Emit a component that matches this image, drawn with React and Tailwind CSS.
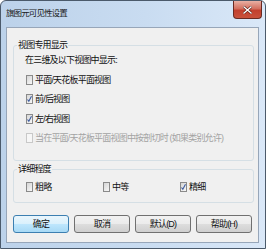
import { useState } from "react";

const font = "font-['Liberation_Sans','Noto_Sans_CJK_SC',sans-serif]";

function CheckBox({ label, checked, disabled, onChange }) {
  return (
    <label
      className={`flex items-center gap-[2px] h-[12px] ${
        disabled ? "text-[#a3a3a3]" : "text-[#111]"
      }`}
      onClick={() => !disabled && onChange && onChange(!checked)}
    >
      <span
        className={`flex items-center justify-center w-[7px] h-[10px] border ${
          disabled
            ? "border-[#c8c8c8] bg-[#f6f6f6]"
            : "border-[#8a8a8a] bg-[linear-gradient(135deg,#d6d6d6,#f7f7f7)]"
        }`}
      >
        {checked && (
          <svg width="6" height="8" viewBox="0 0 6 8">
            <path d="M0.6 4.6 L2.2 6.8 L5.4 0.8" fill="none" stroke="#3b5a9e" strokeWidth="1.3" />
          </svg>
        )}
      </span>
      <span>{label}</span>
    </label>
  );
}

function Button({ children, primary }) {
  return (
    <button
      className={`w-[56px] h-[18px] rounded-[3px] border text-[9px] leading-[12px] tracking-[-0.8px] text-[#111] ${
        primary
          ? "border-[#3c7fb1] bg-[linear-gradient(#eaf6fd,#d9f0fc_50%,#bee6fd_51%,#a7d9f5)]"
          : "border-[#707070] bg-[linear-gradient(#f2f2f2,#ebebeb_50%,#dddddd_51%,#cfcfcf)]"
      }`}
    >
      {children}
    </button>
  );
}

export default function App() {
  const [views, setViews] = useState({ plan: false, front: true, left: true });
  const [level, setLevel] = useState("fine");

  return (
    <div
      className={`w-[266px] h-[249px] flex flex-col border border-[#4b5a6b] rounded-t-[6px] bg-[linear-gradient(to_right,#bcd2ea,#c9dcf1_55%,#dae8f8)] ${font}`}
    >
      <div className="h-[26px] flex items-start">
        <div className="pl-[5px] pt-[7px] text-[8.5px] leading-[11px] tracking-[-0.9px] text-[#1b1b1b]">
          旗图元可见性设置
        </div>
        <div className="ml-auto mr-[3px] w-[29px] h-[18px] flex items-center justify-center rounded-b-[4px] border border-t-0 border-[#6a2a22] bg-[linear-gradient(#e9b0a4,#d36f5f_45%,#c2402e_55%,#c9523c)]">
          <svg width="9" height="8" viewBox="0 0 9 8">
            <path d="M1 1 L8 7 M8 1 L1 7" stroke="#5a1d15" strokeWidth="2.6" strokeLinecap="square" />
            <path d="M1 1 L8 7 M8 1 L1 7" stroke="#fff" strokeWidth="1.4" strokeLinecap="square" />
          </svg>
        </div>
      </div>

      <div className="flex-1 ml-[5px] mr-[6px] mb-[5px] border border-[#97a6b9] bg-[#f0f0f0] pl-[6px] pr-[4px] text-[9px] leading-[12px] tracking-[-0.8px]">
        <fieldset className="mt-[12px] border border-[#d5dfe5] rounded-[3px] pb-[16px]">
          <legend className="ml-[3px] px-[1px] leading-[11px] text-[#111]">视图专用显示</legend>
          <div className="flex flex-col gap-[7.5px] pt-[3px] pl-[12px]">
            <div className="-ml-[1px] text-[#111]">在三维及以下视图中显示:</div>
            <CheckBox
              label="平面/天花板平面视图"
              checked={views.plan}
              onChange={(v) => setViews({ ...views, plan: v })}
            />
            <CheckBox
              label="前/后视图"
              checked={views.front}
              onChange={(v) => setViews({ ...views, front: v })}
            />
            <CheckBox
              label="左/右视图"
              checked={views.left}
              onChange={(v) => setViews({ ...views, left: v })}
            />
            <CheckBox label="当在平面/天花板平面视图中按剖切时 (如果类别允许)" disabled />
          </div>
        </fieldset>

        <fieldset className="mt-[3px] border border-[#d5dfe5] rounded-[3px] pb-[9px]">
          <legend className="ml-[3px] px-[1px] leading-[11px] text-[#111]">详细程度</legend>
          <div className="flex pt-[6px] pl-[12px]">
            <div className="w-[77px]">
              <CheckBox label="粗略" checked={level === "coarse"} onChange={() => setLevel("coarse")} />
            </div>
            <div className="w-[77px]">
              <CheckBox label="中等" checked={level === "medium"} onChange={() => setLevel("medium")} />
            </div>
            <div>
              <CheckBox label="精细" checked={level === "fine"} onChange={() => setLevel("fine")} />
            </div>
          </div>
        </fieldset>

        <div className="flex gap-[5px] mt-[12px]">
          <Button primary>确定</Button>
          <Button>取消</Button>
          <Button>默认(D)</Button>
          <Button>帮助(H)</Button>
        </div>
      </div>
    </div>
  );
}
